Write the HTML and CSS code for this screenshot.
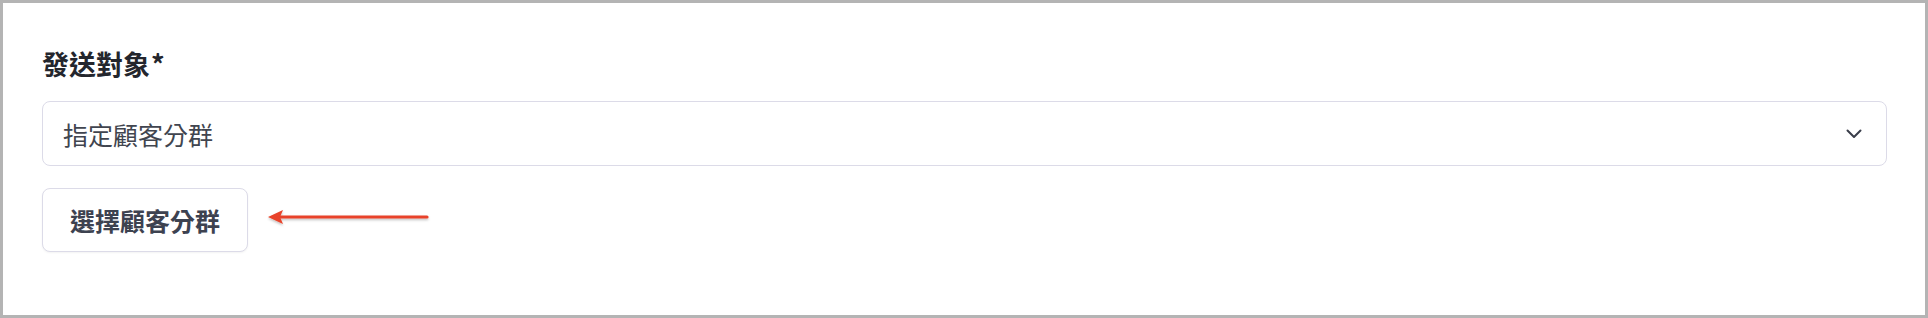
FILE: index.html
```html
<!DOCTYPE html>
<html lang="zh-Hant">
<head>
  <meta charset="UTF-8">
  <title>發送對象</title>
  <link rel="stylesheet" href="styles.css">
</head>
<body>

  <div class="frame">
    <label class="field-label">發送對象<span class="req">*</span></label>

    <div class="select">
      <span class="select-value">指定顧客分群</span>
      <svg class="chevron" width="16" height="10" viewBox="0 0 16 10">
        <path d="M1.5 1.5 L8 8 L14.5 1.5" fill="none" stroke="#3a3e4a" stroke-width="2" stroke-linecap="round" stroke-linejoin="round"/>
      </svg>
    </div>

    <div class="actions">
      <button class="btn">選擇顧客分群</button>
      <!-- annotation arrow -->
      <svg class="arrow" width="164" height="24" viewBox="0 0 164 24">
        <defs>
          <filter id="shadow" x="-10%" y="-50%" width="120%" height="200%">
            <feDropShadow dx="0" dy="1.5" stdDeviation="1" flood-color="#000" flood-opacity="0.25"/>
          </filter>
        </defs>
        <g filter="url(#shadow)">
          <line x1="12" y1="11" x2="160" y2="11" stroke="#e8432a" stroke-width="3.2" stroke-linecap="round"/>
          <path d="M1 11 L16 4 L13 11 L16 18 Z" fill="#e8432a"/>
        </g>
      </svg>
    </div>
  </div>

</body>
</html>
```

FILE: styles.css
```css
/* BASE */
* { margin: 0; padding: 0; box-sizing: border-box; }
body {
  font-family: "Noto Sans CJK TC", "Noto Sans", sans-serif;
  background: #fff;
  color: #22252b;
}

/* FRAME */
.frame {
  width: 1928px;
  height: 318px;
  border: 3px solid #b4b4b4;
  padding: 43px 38px 0 39px;
  display: flex;
  flex-direction: column;
  align-items: flex-start;
}

.field-label {
  font-size: 27px;
  font-weight: 700;
  line-height: 36px;
  color: #24262d;
}
.field-label .req {
  margin-left: 1px;
}

/* SELECT */
.select {
  margin-top: 19px;
  width: 100%;
  height: 65px;
  border: 1px solid #dcdbe8;
  border-radius: 8px;
  padding: 0 24px 0 20px;
  display: flex;
  align-items: center;
  justify-content: space-between;
}
.select-value {
  font-size: 25px;
  color: #41454f;
}

/* BUTTON ROW */
.actions {
  margin-top: 22px;
  display: flex;
  align-items: center;
}
.btn {
  height: 64px;
  padding: 0 27px;
  background: #fff;
  border: 1px solid #dcdbe8;
  border-radius: 8px;
  box-shadow: 0 1px 2px rgba(0, 0, 0, 0.05);
  font-family: inherit;
  font-size: 25px;
  font-weight: 700;
  color: #3d4250;
  cursor: pointer;
}
.arrow {
  margin-left: 19px;
  margin-bottom: 5px;
}
```
